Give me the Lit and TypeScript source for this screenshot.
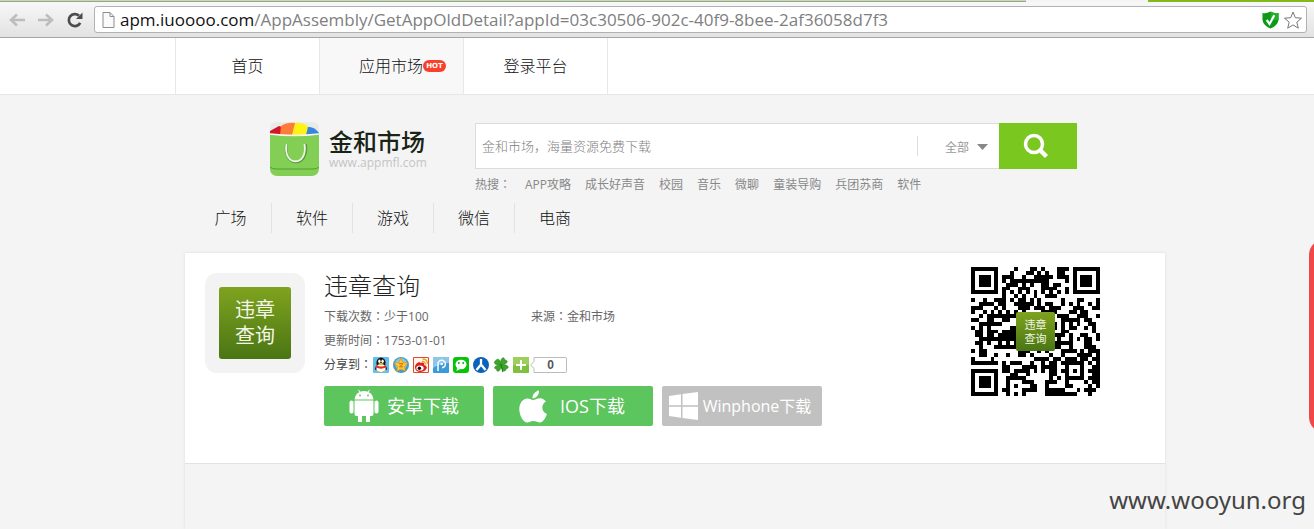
import { LitElement, html, css, svg } from "lit";
import { customElement } from "lit/decorators.js";

const QR_SIZE = 33;

function inFinder(x: number, y: number) {
  const near = (v: number) => v < 8;
  const far = (v: number) => v > QR_SIZE - 9;
  return (near(x) && near(y)) || (far(x) && near(y)) || (near(x) && far(y));
}

function finderDark(x: number, y: number) {
  const fx = x > 16 ? x - (QR_SIZE - 7) : x;
  const fy = y > 16 ? y - (QR_SIZE - 7) : y;
  if (fx < 0 || fy < 0 || fx > 6 || fy > 6) return false;
  const ring = Math.max(Math.abs(fx - 3), Math.abs(fy - 3));
  return ring !== 2;
}

function qrPath() {
  let d = "";
  let seed = 1753;
  for (let y = 0; y < QR_SIZE; y++) {
    for (let x = 0; x < QR_SIZE; x++) {
      seed = (seed * 1103515245 + 12345) & 0x7fffffff;
      let dark = ((seed >> 16) & 1) === 1;
      const ring = Math.max(Math.abs(x - 26), Math.abs(y - 26));
      if (inFinder(x, y)) dark = finderDark(x, y);
      else if (ring <= 2) dark = ring !== 1;
      else if (x === 6 || y === 6) dark = (x + y) % 2 === 0;
      if (dark) d += `M${x} ${y}h1v1h-1z`;
    }
  }
  return d;
}

@customElement("app-root")
export class AppRoot extends LitElement {
  static styles = css`
    :host {
      display: flex;
      flex-direction: column;
      position: relative;
      min-height: 100vh;
      overflow: hidden;
      background: #f4f4f4;
      color: #333;
      font: 12px/24px "Open Sans", "Noto Sans CJK SC", sans-serif;
    }
    * { box-sizing: border-box; }
    a { color: inherit; text-decoration: none; }
    button, input, select { font: inherit; margin: 0; padding: 0; border: 0; }
    svg { display: block; flex: none; }

    .tabs { display: flex; height: 2px; background: #f4f4f4; }
    .tab { flex: 1; background: #c4d9b4; border-bottom: 1px solid #98a58e; }
    .tab-gap { width: 122px; }
    .tab-end { width: 166px; background: #85b81c; }
    .toolbar {
      display: flex;
      align-items: center;
      gap: 8px;
      height: 36px;
      padding: 0 7px 0 8px;
      background: linear-gradient(#f8f8f8, #e2e2e2);
      border-bottom: 1px solid #a5a5a5;
    }
    .tool { display: flex; background: none; }
    .tools { display: flex; gap: 11px; padding-right: 2px; }
    .omnibox {
      display: flex;
      flex: 1;
      align-items: center;
      gap: 5px;
      height: 27px;
      padding: 0 4px 0 7px;
      background: #fff;
      border: 1px solid #b2b2b2;
      border-radius: 3px;
    }
    .url { flex: 1; font: 17px/24px "Open Sans", sans-serif; color: #808080; white-space: nowrap; }
    .host { color: #111; }

    .site-nav { background: #fff; border-bottom: 1px solid #e6e6e6; }
    .site-nav-inner { display: flex; margin-left: 175px; }
    .site-link {
      display: flex;
      align-items: center;
      justify-content: center;
      width: 144px;
      height: 56px;
      border-left: 1px solid #e8e8e8;
      color: #111;
      font-size: 16px;
      font-weight: 300;
    }
    .site-link:last-child { width: 145px; border-right: 1px solid #e8e8e8; }
    .site-link.active { background: #f8f8f8; padding-left: 22px; }
    .hot {
      width: 23px;
      height: 12px;
      border-radius: 6px;
      background: #f8402c;
      color: #fff;
      font: bold 7px/12px "DejaVu Sans", sans-serif;
      text-align: center;
      flex: none;
    }

    .shell { flex: 1; display: flex; flex-direction: column; width: 100%; padding-left: 36px; }
    .page { flex: 1; display: flex; flex-direction: column; width: 100%; max-width: 980px; margin: 0 auto; }
    .header { display: flex; gap: 49px; padding: 26px 88px 0 84px; }
    .brand { display: flex; align-items: flex-start; gap: 9px; width: 157px; }
    .brand-name { color: #1a2415; font: 500 24px/28px "Noto Sans CJK SC", sans-serif; white-space: nowrap; }
    .brand-text { padding-top: 6px; }
    .brand-site { color: #c4c4c4; font: 12px/16px "Open Sans", sans-serif; }
    .search-area { flex: 1; padding-top: 2px; }
    .search { display: flex; height: 46px; }
    .search-field {
      flex: 1;
      display: flex;
      align-items: center;
      min-width: 0;
      padding-right: 11px;
      background: #fff;
      border: 1px solid #dcdcdc;
      border-right: 0;
    }
    .search-input { flex: 1; min-width: 0; padding-left: 6px; background: none; font: 300 13px/20px "Noto Sans CJK SC", sans-serif; }
    .search-input::placeholder { color: #808080; opacity: 1; }
    .scope { position: relative; display: flex; align-items: center; height: 20px; padding-left: 27px; border-left: 1px solid #ddd; color: #999; }
    .scope-select { width: 43px; height: 20px; appearance: none; background: none; color: #999; }
    .scope-arrow { position: absolute; right: 0; top: 8px; pointer-events: none; }
    .search-button { display: flex; align-items: center; justify-content: center; width: 78px; padding-right: 4px; background: #7ac71f; }
    .hot-words { display: flex; gap: 14px; line-height: 31px; color: #888; white-space: nowrap; }
    .wide-colon { font-family: "Noto Sans CJK TC", sans-serif; line-height: 1; }

    .categories { display: flex; margin-top: 3px; padding-left: 5px; }
    .category { width: 81px; height: 30px; text-align: center; color: #111; font-size: 16px; font-weight: 300; line-height: 30px; border-left: 1px solid #e2e2e2; }
    .category:first-child { border-left: 0; }

    .panel { flex: 1; margin-top: 20px; box-shadow: 0 0 3px #ddd; }
    .detail { display: flex; gap: 19px; min-height: 211px; padding: 14px 65px 14px 20px; background: #fff; border-bottom: 1px solid #e2e2e2; }
    .app-icon { display: flex; align-items: center; justify-content: center; width: 100px; height: 100px; margin-top: 6px; background: #f3f3f3; border-radius: 12px; }
    .tile {
      display: flex;
      align-items: center;
      justify-content: center;
      width: 72px;
      height: 72px;
      border-radius: 3px;
      background: linear-gradient(#7fa31f, #4a7514);
      color: #f2f6e8;
      font-size: 20px;
      line-height: 26px;
      text-align: center;
    }
    .info { flex: 1; color: #666; }
    .title { margin: 0; color: #222; font-size: 24px; line-height: 38px; font-weight: 300; }
    .facts { display: grid; grid-template-columns: 207px 1fr; }
    .share { display: flex; align-items: center; gap: 4px; height: 24px; color: #444; }
    .share-label { margin-right: -3px; }
    .count { display: flex; align-items: center; margin-left: -3px; }
    .count-box { width: 32px; height: 16px; border: 1px solid #bbb; border-left: 0; border-radius: 0 2px 2px 0; color: #555; font: bold 12px/14px "Liberation Sans", sans-serif; text-align: center; }
    .downloads { display: flex; gap: 9px; margin-top: 9px; }
    .download {
      display: flex;
      align-items: center;
      justify-content: center;
      gap: 8px;
      width: 160px;
      height: 40px;
      border-radius: 2px;
      background: #5cc55e;
      color: #fff;
      font-size: 18px;
      white-space: nowrap;
    }
    .download.ios { gap: 13px; padding-right: 2px; }
    .download.win { gap: 5px; padding-right: 4px; background: #c1c1c1; font-size: 16px; }
    .qr { position: relative; width: 129px; height: 129px; }
    .qr-tile {
      position: absolute;
      left: 45px;
      top: 45px;
      width: 39px;
      height: 39px;
      border-radius: 2px;
      font-size: 11px;
      line-height: 14px;
    }
    .side-tab { position: absolute; right: -27px; top: 239px; width: 32px; height: 194px; border-radius: 16px; background: #f04848; }
    .watermark { position: absolute; right: 8px; bottom: 12px; color: #444; font: 24px/34px "Noto Sans", sans-serif; }
  `;

  private hotWords = ["APP攻略", "成长好声音", "校园", "音乐", "微聊", "童装导购", "兵团苏商", "软件"];
  private categories = ["广场", "软件", "游戏", "微信", "电商"];

  private shareIcons = [
    { name: "QQ", art: svg`<rect width="16" height="16" rx="1" fill="#66bdec"/><path d="M3 9Q2 11 2 13l2-1zm10 0q1 2 1 4l-2-1z" fill="#111"/><ellipse cx="8" cy="6" rx="4.6" ry="5.6" fill="#161616"/><ellipse cx="8" cy="11" rx="4.6" ry="4" fill="#fff"/><path d="M3 8.2q5 2.6 10 0v2.3q-5 2.3-10 0z" fill="#e52b20"/><ellipse cx="6.4" cy="4.2" rx="1.2" ry="1.7" fill="#fff"/><ellipse cx="9.6" cy="4.2" rx="1.2" ry="1.7" fill="#fff"/><ellipse cx="8" cy="7" rx="2.7" ry="1" fill="#fbb919"/><path d="M3 15q2-2 4 0zm6 0q2-2 4 0z" fill="#fbb919"/>` },
    { name: "QQ空间", art: svg`<circle cx="8" cy="8" r="8" fill="#4b9ac4"/><circle cx="8" cy="7" r="6" fill="#8cc7df"/><path d="M8 1l2.100 4.600 5 .6-3.700 3.300 1 4.900L8 12l-4.400 2.400 1-4.900L.9 6.200l5-.6z" fill="#fdc82c" stroke="#d98b10" stroke-width=".6"/><path d="M6 6.700h4L6.500 9.800H10" fill="none" stroke="#d56b18" stroke-width="1"/>` },
    { name: "新浪微博", art: svg`<rect width="16" height="16" rx="1" fill="#e5482c"/><path d="M1 1h14v14H1z" fill="#fff4e8"/><path d="M2 10c0-3 4-6 6-4 2-1 4 0 3 2 5 1 3 6-3 7-4 0-6-2-6-5z" fill="#e02020"/><ellipse cx="7" cy="11" rx="3.700" ry="2.600" fill="#fff"/><circle cx="6.400" cy="11.200" r="1.700" fill="#111"/><path d="M9 4.500q3-.5 3.500 3M9.500 2q5 0 5 5" fill="none" stroke="#f6a21c" stroke-width="1.300"/>` },
    { name: "腾讯微博", art: svg`<rect width="16" height="16" rx="1" fill="#3b9ad8"/><path d="M0 0h16v6Q8 6 0 11z" fill="#8cc6ea"/><path d="M5 14V7.200a3.700 3.700 0 1 1 4 3.500" fill="none" stroke="#fff" stroke-width="1.500"/><circle cx="8.700" cy="7" r="1.300" fill="#fff"/>` },
    { name: "微信", art: svg`<rect width="16" height="16" rx="3" fill="#06c406"/><ellipse cx="8" cy="7.500" rx="5.500" ry="4.800" fill="#fff"/><path d="M4 11l-.5 3L7 12z" fill="#fff"/><circle cx="5.800" cy="6" r=".9" fill="#06a406"/><circle cx="10.200" cy="6" r=".9" fill="#06a406"/>` },
    { name: "人人网", art: svg`<circle cx="8" cy="8" r="8" fill="#0a63bb"/><path d="M8 2v5.500L3.500 13M8 7.500l4.500 5.500" fill="none" stroke="#fff" stroke-width="2.300"/>` },
    { name: "朋友网", art: svg`<g fill="#3da62a" stroke="#1e7a18" stroke-width=".5"><path d="M8 8C3 9 0 6 2 4l1-.5C4 1 8 2 8 8z"/><path d="M8 8C7 3 9 0 11 1l1 2c3 0 4 4-4 5z"/><path d="M8 8c5-1 8 1 7 3l-2 1c0 3-4 3-5-4z"/><path d="M8 8c0 5-2 7-4 6l-.5-2C0 12 1 8 8 8z"/></g><path d="M8 8l2 7" stroke="#1e7a18" stroke-width="1.200"/>` },
    { name: "更多", art: svg`<rect width="16" height="16" rx="1" fill="#7fc03c"/><path d="M0 0h16v8H0z" fill="#9ccf5c"/><path d="M8 3v10M3 8h10" stroke="#fff" stroke-width="2"/>` },
  ];

  render() {
    return html`
      <div class="tabs"><div class="tab"></div><div class="tab-gap"></div><div class="tab-end"></div></div>
      <div class="toolbar">
        <div class="tools">
          <button class="tool" aria-label="后退"><svg width="18" height="18" viewBox="0 0 18 18"><path d="M17 9H3M9 3.500L3 9l6 5.500" fill="none" stroke="#bdbdbd" stroke-width="2.600"/></svg></button>
          <button class="tool" aria-label="前进"><svg width="18" height="18" viewBox="0 0 18 18"><path d="M1 9h14M9 3.500L15 9l-6 5.500" fill="none" stroke="#bdbdbd" stroke-width="2.600"/></svg></button>
          <button class="tool" aria-label="刷新"><svg width="18" height="18" viewBox="0 0 18 18"><path d="M14.200 11.800A6 6 0 1 1 13 4.800" fill="none" stroke="#4c4c4c" stroke-width="2.700"/><path d="M16.500 1.500V8H10z" fill="#4c4c4c"/></svg></button>
        </div>
        <div class="omnibox">
          <svg width="13" height="16" viewBox="0 0 13 16"><path d="M1 .5h7l4 4v11H1z" fill="#fafafa" stroke="#8d8d8d"/><path d="M8 .5v4h4" fill="none" stroke="#8d8d8d"/></svg>
          <span class="url"><span class="host">apm.iuoooo.com</span>/AppAssembly/GetAppOldDetail?appId=03c30506-902c-40f9-8bee-2af36058d7f3</span>
          <svg width="17" height="18" viewBox="0 0 18 18"><path d="M.5 1.500q4 1 8.500-1.500 4.500 2.500 8.500 1.500V9q-1 6-8.500 9Q1.500 15 .5 9z" fill="#0b9a18"/><path d="M9 0q4.500 2.500 8.500 1.500V9H9z" fill="#22ad2a"/><path d="M5 9l3 4.200L13 4" fill="none" stroke="#fff" stroke-width="2.300"/></svg>
          <svg width="18" height="18" viewBox="0 0 18 18"><path d="M9 1l2.300 5.700 6.200.5-4.700 4 1.500 6L9 13.900l-5.300 3.300 1.500-6-4.700-4 6.200-.5z" fill="#fff" stroke="#777"/></svg>
        </div>
      </div>

      <nav class="site-nav">
        <div class="site-nav-inner">
          <a class="site-link" href="#">首页</a>
          <a class="site-link active" href="#">应用市场<span class="hot">HOT</span></a>
          <a class="site-link" href="#">登录平台</a>
        </div>
      </nav>

      <div class="shell">
        <main class="page">
          <header class="header">
            <a class="brand" href="#">
              <svg width="51" height="56" viewBox="0 0 51 56">
                <rect x="1" y="1" width="49" height="30" rx="6" fill="#e9ebe9"/>
                <path d="M1 14V10l9-5 6 2v7z" fill="#d3142a"/><path d="M11 14l1-9q6-4 14-3v12z" fill="#ff7b3a"/>
                <path d="M23 14l3-12q6-1 13 3v9z" fill="#fff214"/><path d="M37 14l2-8q6-1 11 6v2z" fill="#3a84e0"/>
                <path d="M1 13q24 3 49 0v35a7 7 0 0 1-7 7H8a7 7 0 0 1-7-7z" fill="#83ce54"/>
                <path d="M1 13q24 3 49 0" fill="none" stroke="#f3f8ee" stroke-width="1.500"/>
                <path d="M1 46q2 2 6 2h37q4 0 6-2" fill="none" stroke="#4fa02e"/>
                <path d="M17.500 23c-4 24 23 24 19 0" fill="none" stroke="#4e9c33" stroke-width="2.600"/>
                <path d="M17.500 23c-4 23 22 23 18 0" fill="none" stroke="#f3f3ec" stroke-width="1.800"/>
              </svg>
              <span class="brand-text">
                <div class="brand-name">金和市场</div>
                <div class="brand-site">www.appmfl.com</div>
              </span>
            </a>
            <div class="search-area">
              <form class="search" @submit=${(e: Event) => e.preventDefault()}>
                <div class="search-field">
                  <input class="search-input" type="text" aria-label="搜索" placeholder="金和市场，海量资源免费下载" />
                  <div class="scope">
                    <select class="scope-select" aria-label="分类"><option>全部</option></select>
                    <svg class="scope-arrow" width="11" height="6" viewBox="0 0 11 6"><path d="M0 0h11L5.500 6z" fill="#888"/></svg>
                  </div>
                </div>
                <button class="search-button" aria-label="搜索">
                  <svg width="26" height="26" viewBox="0 0 26 26"><circle cx="11" cy="11" r="8.500" fill="none" stroke="#fff" stroke-width="3.500"/><path d="M17 17l6.500 6.500" stroke="#fff" stroke-width="4.500"/></svg>
                </button>
              </form>
              <div class="hot-words">
                <span>热搜<span class="wide-colon">：</span></span>
                ${this.hotWords.map((w) => html`<a href="#">${w}</a>`)}
              </div>
            </div>
          </header>

          <nav class="categories">
            ${this.categories.map((c) => html`<a class="category" href="#">${c}</a>`)}
          </nav>

          <section class="panel">
            <div class="detail">
              <div class="app-icon"><div class="tile">违章<br />查询</div></div>
              <div class="info">
                <h1 class="title">违章查询</h1>
                <div class="facts">
                  <span>下载次数<span class="wide-colon">：</span>少于100</span>
                  <span>来源<span class="wide-colon">：</span>金和市场</span>
                  <span>更新时间<span class="wide-colon">：</span>1753-01-01</span>
                </div>
                <div class="share">
                  <span class="share-label">分享到<span class="wide-colon">：</span></span>
                  ${this.shareIcons.map((i) => html`<a href="#" aria-label=${i.name}><svg width="16" height="16" viewBox="0 0 16 16">${i.art}</svg></a>`)}
                  <span class="count">
                    <svg width="5" height="16" viewBox="0 0 5 16"><path d="M5 .5H4v4L.7 8 4 11.500v4h1" fill="#fff" stroke="#bbb"/></svg>
                    <span class="count-box">0</span>
                  </span>
                </div>
                <div class="downloads">
                  <button class="download">
                    <svg width="30" height="34" viewBox="0 0 30 34" fill="#fff"><path d="M5.500 10.500a9.500 8.500 0 0 1 19 0z"/><path d="M9.500.8l2 3.500m9-3.500l-2 3.500" stroke="#fff" stroke-width="1"/><circle cx="11" cy="6.500" r=".9" fill="#5cc55e"/><circle cx="19" cy="6.500" r=".9" fill="#5cc55e"/><path d="M5.500 11.500h19V25a2 2 0 0 1-2 2h-15a2 2 0 0 1-2-2z"/><rect x=".5" y="11.500" width="4" height="13" rx="2"/><rect x="25.500" y="11.500" width="4" height="13" rx="2"/><path d="M9 26h4v7H9zm8 0h4v7h-4z"/></svg>
                    安卓下载
                  </button>
                  <button class="download ios">
                    <svg width="28" height="33" viewBox="0 0 28 33" fill="#fff"><path d="M20 .5c.5 4-3 8-6.500 8C13 4.500 16.500 1 20 .5z"/><path d="M14 10c2 0 3.500-1.800 7-1.800 2.500 0 4.500 1.300 6 3.300-5.500 3-4.500 10.500 1 12.500-1.500 4-4 8.500-7 8.500-2.500 0-3.500-1.500-6.500-1.500S10.500 32.500 8 32.500C4.500 32.500.3 25.500.3 19c0-6.500 4-10.600 8-10.600C11 8.400 12.500 10 14 10z"/></svg>
                    IOS下载
                  </button>
                  <button class="download win">
                    <svg width="29" height="28" viewBox="0 0 29 28" fill="#fff"><path d="M0 4l12-1.700V13.300H0zM13.500 2L29 0v13.300H13.500zM0 14.700h12v11L0 24zM13.500 14.700H29V28l-15.500-2z"/></svg>
                    Winphone下载
                  </button>
                </div>
              </div>
              <div class="qr">
                <svg width="129" height="129" viewBox="0 0 33 33" shape-rendering="crispEdges" role="img" aria-label="二维码"><path d=${qrPath()} fill="#000"/></svg>
                <div class="tile qr-tile">违章<br />查询</div>
              </div>
            </div>
          </section>
        </main>
      </div>
      <div class="side-tab"></div>
      <div class="watermark">www.wooyun.org</div>
    `;
  }
}
